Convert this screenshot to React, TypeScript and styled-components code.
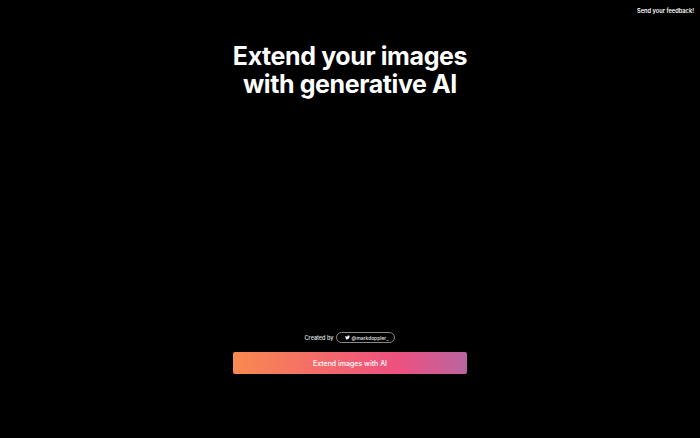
import React from 'react'
import styled, { createGlobalStyle } from 'styled-components'
import { FaTwitter } from 'react-icons/fa'

const GlobalStyle = createGlobalStyle`
  html, body {
    margin: 0;
    padding: 0;
    background: #000;
  }
  body {
    font-family: Inter, "Liberation Sans", sans-serif;
    color: #fff;
  }
`

const Page = styled.div`
  display: flex;
  flex-direction: column;
  align-items: center;
  height: 438px;
  overflow: hidden;
  background: #000;
`

const TopBar = styled.div`
  display: flex;
  justify-content: flex-end;
  width: 100%;
  box-sizing: border-box;
  padding: 7px 6px 0 0;
`

const FeedbackLink = styled.a`
  font-size: 5.7px;
  line-height: 7px;
  font-weight: 600;
  color: #fff;
`

const Title = styled.h1`
  margin: 29px 0 0;
  font-size: 25px;
  line-height: 27.5px;
  font-weight: 700;
  letter-spacing: -0.4px;
  text-align: center;
`

const Spacer = styled.div`
  flex: 1;
`

const CreditRow = styled.div`
  display: flex;
  align-items: center;
  gap: 3px;
  margin-bottom: 9px;
`

const CreditLabel = styled.span`
  font-size: 5.5px;
  font-weight: 500;
  color: #e5e5e5;
`

const HandlePill = styled.a`
  display: flex;
  align-items: center;
  justify-content: flex-end;
  gap: 2px;
  width: 59px;
  height: 11px;
  box-sizing: border-box;
  padding-right: 6px;
  border: 1px solid #8a8a8a;
  border-radius: 6px;
  font-size: 4.9px;
  font-weight: 500;
  color: #e5e5e5;
`

const CtaButton = styled.button`
  width: 234px;
  height: 22px;
  margin-bottom: 64px;
  padding: 0;
  border: 0;
  border-radius: 2px;
  background: linear-gradient(90deg, #f98a50 0%, #ee5080 70%, #b9659f 100%);
  font-family: inherit;
  font-size: 7px;
  font-weight: 500;
  color: #fff;
`

export default function App() {
  return (
    <Page>
      <GlobalStyle />
      <TopBar>
        <FeedbackLink>Send your feedback!</FeedbackLink>
      </TopBar>
      <Title>
        Extend your images
        <br />
        with generative AI
      </Title>
      <Spacer />
      <CreditRow>
        <CreditLabel>Created by</CreditLabel>
        <HandlePill>
          <FaTwitter size={5} color="#fff" />
          @markdoppler_
        </HandlePill>
      </CreditRow>
      <CtaButton>Extend images with AI</CtaButton>
    </Page>
  )
}
